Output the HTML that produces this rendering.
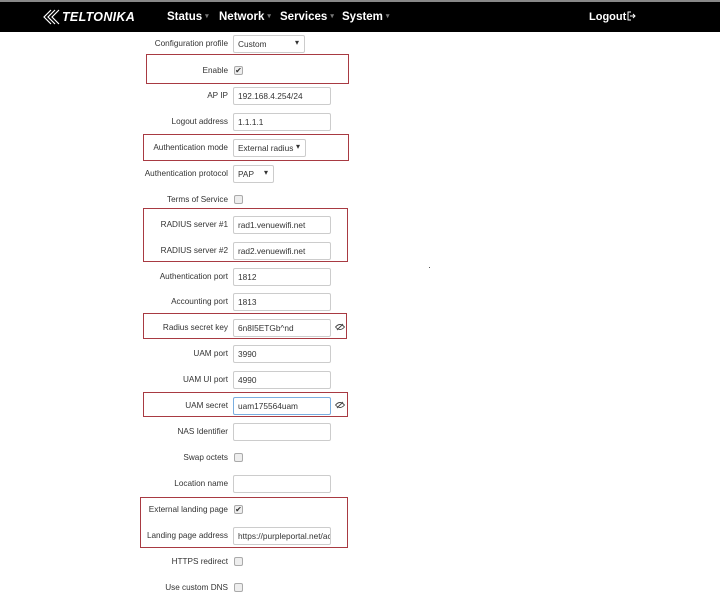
<!DOCTYPE html>
<html><head><meta charset="utf-8"><style>
*{margin:0;padding:0;box-sizing:border-box}
body{width:720px;height:600px;background:#fff;font-family:"Liberation Sans",sans-serif;position:relative;overflow:hidden}
#hd{position:absolute;left:0;top:0;width:720px;height:32px;background:#000;border-top:2px solid #888}
.nav{position:absolute;top:9px;color:#fff;font-weight:bold;font-size:11.5px}
.nav i{font-style:normal;color:#777;font-size:7px;margin-left:3px;vertical-align:2px}
.lb{position:absolute;right:492px;font-size:8.2px;color:#333;white-space:nowrap}
.in{position:absolute;left:233px;width:98px;height:18px;border:1px solid #ccc;border-radius:2px;font-size:8.3px;color:#333;padding:3px 0 0 4px;white-space:nowrap;overflow:hidden}
.cb{position:absolute;left:234px;width:9px;height:9px;border:1px solid #aaa;border-radius:2px;background:#eee;font-size:8px;line-height:7px;text-align:center;color:#333}
.sel:after{content:"▾";position:absolute;right:5px;top:2px;font-size:8px}
.rb{position:absolute;border:1.5px solid #a83a42}
.eye{position:absolute;left:335px;width:10px;height:8px}
</style></head><body>
<div id="hd">
<svg style="position:absolute;left:42px;top:7px" width="20" height="16" viewBox="0 0 20 16"><g fill="none" stroke="#fff" stroke-width="1.2"><path d="M9 1 L2 8 L9 15"/><path d="M13 1 L6 8 L13 15"/><path d="M17 1 L10 8 L17 15"/></g></svg>
<div style="position:absolute;left:62px;top:8px;color:#fff;font-weight:bold;font-style:italic;font-size:12.5px;letter-spacing:0.3px">TELTONIKA</div>
<div class="nav" style="left:167px">Status<i>▾</i></div>
<div class="nav" style="left:219px">Network<i>▾</i></div>
<div class="nav" style="left:280px">Services<i>▾</i></div>
<div class="nav" style="left:342px">System<i>▾</i></div>
<div class="nav" style="left:589px;font-size:11px">Logout</div>
<svg style="position:absolute;left:627px;top:9px" width="9" height="10" viewBox="0 0 9 10"><path d="M4 1H1V9H4" fill="none" stroke="#fff"/><path d="M3 5H8M6 3L8 5L6 7" fill="none" stroke="#fff"/></svg>
</div>

<div class="rb" style="left:146px;top:54px;width:203px;height:30px"></div>
<div class="rb" style="left:143px;top:134px;width:206px;height:27px"></div>
<div class="rb" style="left:143px;top:208px;width:205px;height:54px"></div>
<div class="rb" style="left:143px;top:313px;width:204px;height:26px"></div>
<div class="rb" style="left:143px;top:392px;width:205px;height:25px"></div>
<div class="rb" style="left:140px;top:497px;width:208px;height:51px"></div>

<div class="lb" style="top:39px">Configuration profile</div><div class="in sel" style="top:35px;width:72px">Custom</div>
<div class="lb" style="top:66px">Enable</div><div class="cb" style="top:66px">✔</div>
<div class="lb" style="top:91px">AP IP</div><div class="in" style="top:87px">192.168.4.254/24</div>
<div class="lb" style="top:117px">Logout address</div><div class="in" style="top:113px">1.1.1.1</div>
<div class="lb" style="top:143px">Authentication mode</div><div class="in sel" style="top:139px;width:73px">External radius</div>
<div class="lb" style="top:169px">Authentication protocol</div><div class="in sel" style="top:165px;width:41px">PAP</div>
<div class="lb" style="top:195px">Terms of Service</div><div class="cb" style="top:195px"></div>
<div class="lb" style="top:220px">RADIUS server #1</div><div class="in" style="top:216px">rad1.venuewifi.net</div>
<div class="lb" style="top:246px">RADIUS server #2</div><div class="in" style="top:242px">rad2.venuewifi.net</div>
<div class="lb" style="top:272px">Authentication port</div><div class="in" style="top:268px">1812</div>
<div class="lb" style="top:297px">Accounting port</div><div class="in" style="top:293px">1813</div>
<div class="lb" style="top:323px">Radius secret key</div><div class="in" style="top:319px">6n8I5ETGb^nd</div>
<svg class="eye" style="top:323px" viewBox="0 0 10 8"><path d="M0.5 4Q5 -1 9.5 4Q5 9 0.5 4Z" fill="none" stroke="#444" stroke-width="0.9"/><path d="M2 7L8 1" stroke="#444" stroke-width="0.9"/></svg>
<div class="lb" style="top:349px">UAM port</div><div class="in" style="top:345px">3990</div>
<div class="lb" style="top:375px">UAM UI port</div><div class="in" style="top:371px">4990</div>
<div class="lb" style="top:401px">UAM secret</div><div class="in" style="top:397px;border-color:#7aaee0">uam175564uam</div>
<svg class="eye" style="top:401px" viewBox="0 0 10 8"><path d="M0.5 4Q5 -1 9.5 4Q5 9 0.5 4Z" fill="none" stroke="#444" stroke-width="0.9"/><path d="M2 7L8 1" stroke="#444" stroke-width="0.9"/></svg>
<div class="lb" style="top:427px">NAS Identifier</div><div class="in" style="top:423px"></div>
<div class="lb" style="top:453px">Swap octets</div><div class="cb" style="top:453px"></div>
<div class="lb" style="top:479px">Location name</div><div class="in" style="top:475px"></div>
<div class="lb" style="top:505px">External landing page</div><div class="cb" style="top:505px">✔</div>
<div class="lb" style="top:531px">Landing page address</div><div class="in" style="top:527px">https://purpleportal.net/acc</div>
<div class="lb" style="top:557px">HTTPS redirect</div><div class="cb" style="top:557px"></div>
<div class="lb" style="top:583px">Use custom DNS</div><div class="cb" style="top:583px"></div>
<div style="position:absolute;left:429px;top:267px;width:1px;height:1px;background:#555"></div>
</body></html>
